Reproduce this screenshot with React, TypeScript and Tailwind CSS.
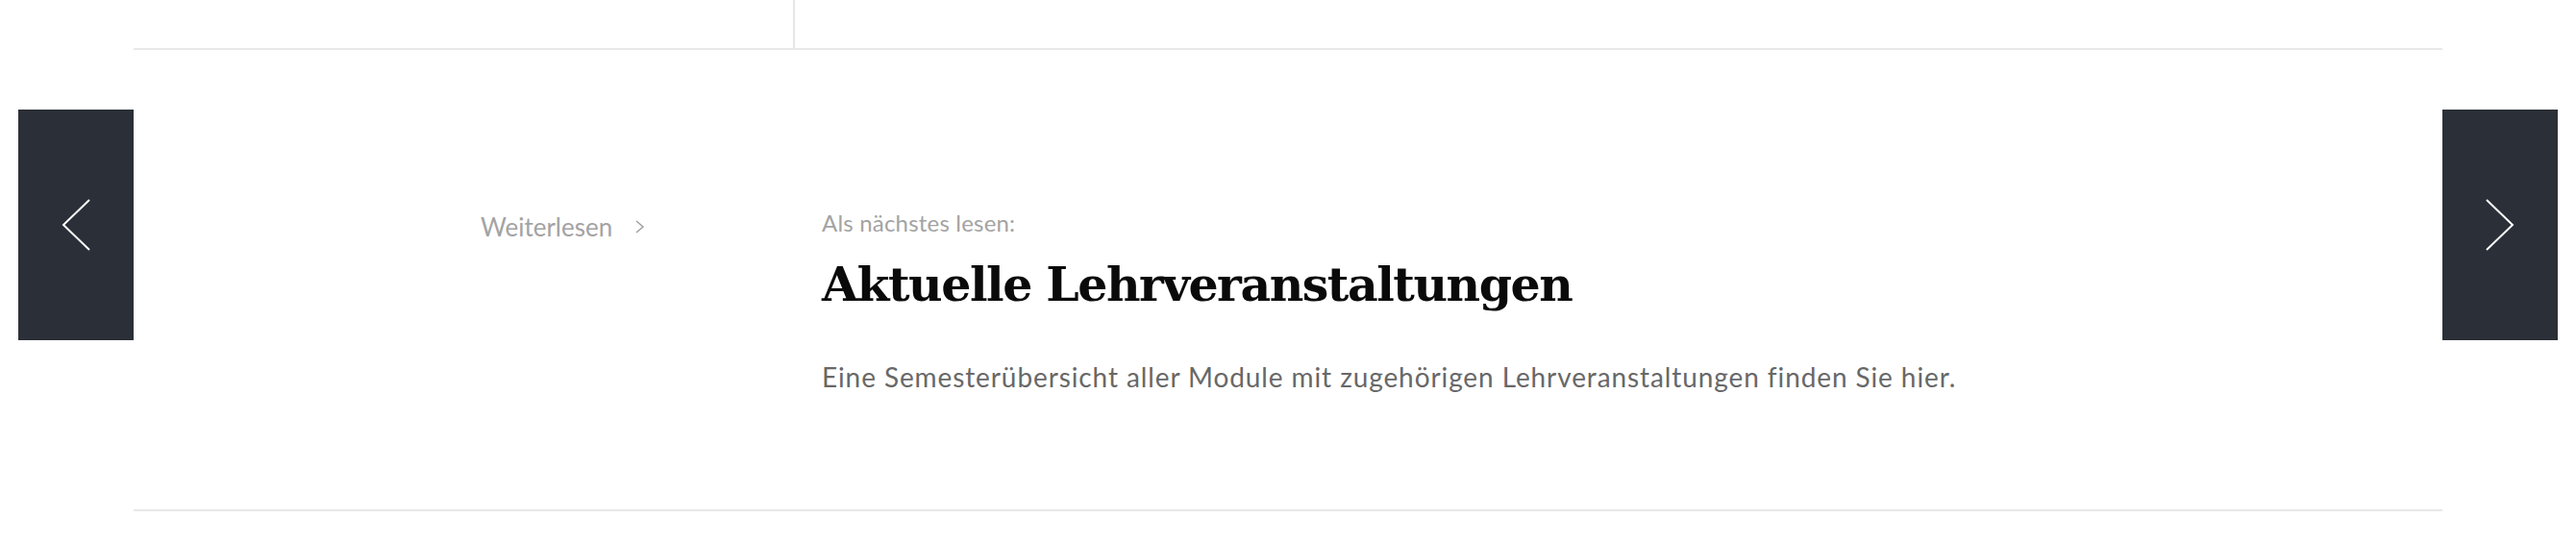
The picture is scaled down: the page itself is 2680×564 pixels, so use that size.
import React from "react";

function Chevron({ dir }: { dir: "left" | "right" }) {
  const points = dir === "left" ? "29,1 2,27 29,53" : "1,1 28,27 1,53";
  return (
    <svg width="30" height="54" viewBox="0 0 30 54" fill="none">
      <polyline points={points} stroke="#ffffff" strokeWidth="2" />
    </svg>
  );
}

function NavButton({ dir }: { dir: "left" | "right" }) {
  return (
    <div className="w-[120px] shrink-0 pt-[64px]">
      <button className="flex h-[240px] w-[120px] items-center justify-center bg-[#2b2f37]">
        <Chevron dir={dir} />
      </button>
    </div>
  );
}

export default function App() {
  return (
    <div className="h-[564px] w-[2680px] overflow-hidden bg-white font-['Lato',sans-serif]">
      {/* tail of the previous row */}
      <div className="flex h-[50px] px-[139px]">
        <div className="w-[688px] border-r-2 border-[#e6e6e6]" />
      </div>

      <div className="flex px-[19px]">
        <NavButton dir="left" />

        <div className="flex h-[482px] flex-1 border-y-2 border-[#e8e8e8]">
          <div className="w-[716px] shrink-0 pl-[361px] pt-[167px]">
            <a className="flex items-center gap-[24px] text-[26px] leading-[34px] text-[#a3a3a3]">
              Weiterlesen
              <svg width="10" height="14" viewBox="0 0 10 14" fill="none">
                <polyline points="1,1 8,7 1,13" stroke="#a3a3a3" strokeWidth="1.6" />
              </svg>
            </a>
          </div>

          <div className="flex-1 pt-[166px]">
            <p className="text-[24px] leading-[28px] tracking-[0.2px] text-[#a3a3a3]">Als nächstes lesen:</p>
            <h2 className="mt-[20px] font-['DejaVu_Serif',serif] text-[49px] font-bold leading-[60px] tracking-[-1.5px] text-[#0a0a0a]">
              Aktuelle Lehrveranstaltungen
            </h2>
            <p className="mt-[49px] text-[28px] leading-[34px] tracking-[0.9px] text-[#686868]">
              Eine Semesterübersicht aller Module mit zugehörigen Lehrveranstaltungen finden Sie hier.
            </p>
          </div>
        </div>

        <NavButton dir="right" />
      </div>
    </div>
  );
}
